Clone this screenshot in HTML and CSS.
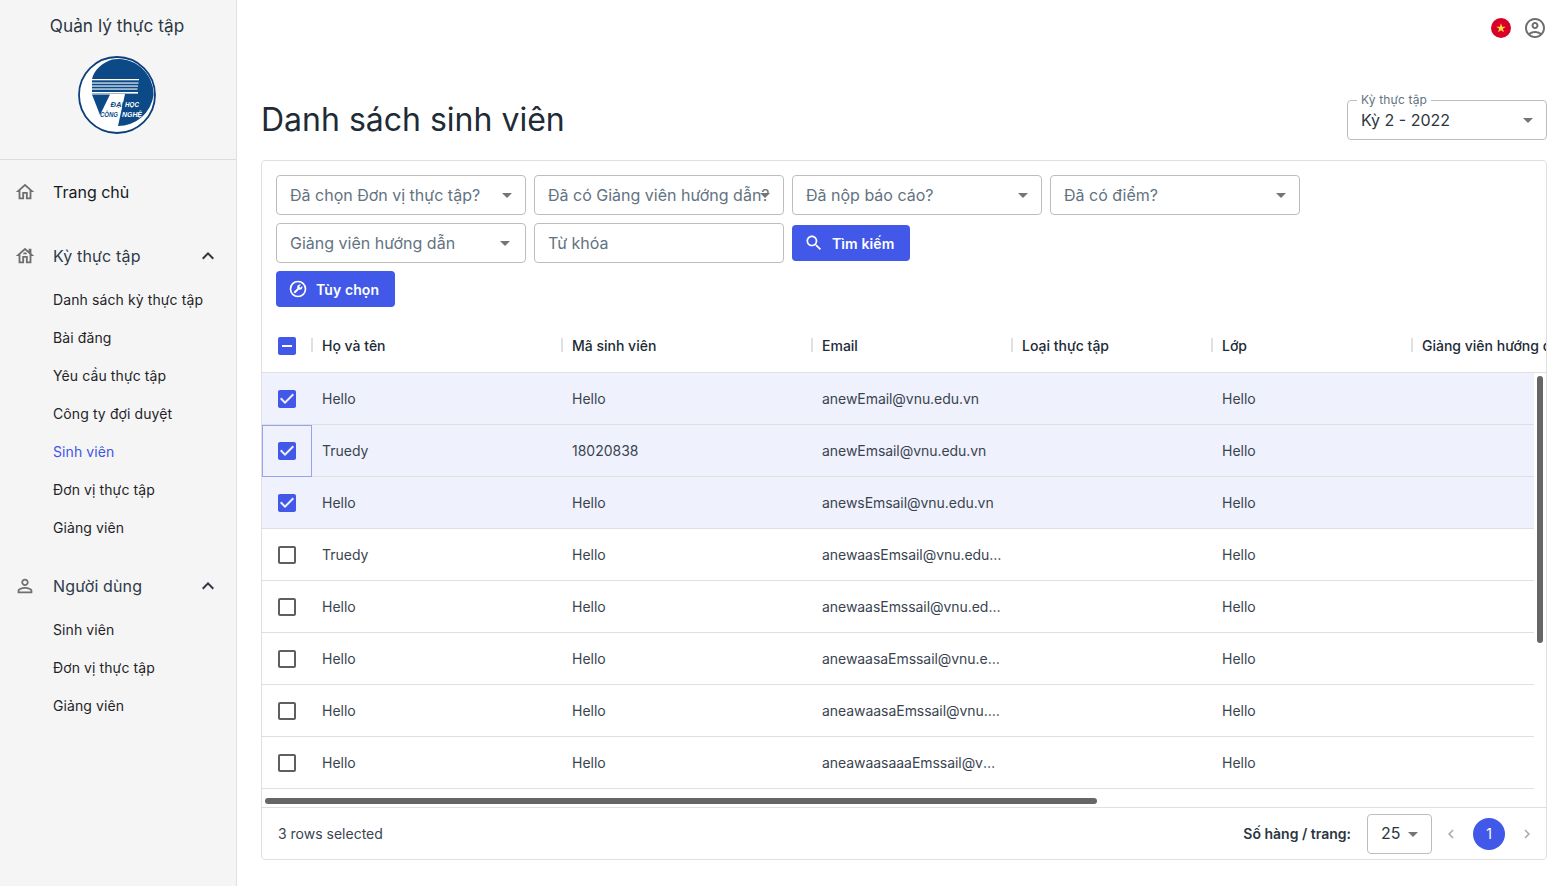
FILE: index.html
```html
<!DOCTYPE html>
<html lang="vi">
<head>
<meta charset="utf-8">
<title>Danh sách sinh viên</title>
<link rel="stylesheet" href="styles.css">
</head>
<body>
<svg class="defs" width="0" height="0" aria-hidden="true">
  <symbol id="cb-off" viewBox="0 0 24 24"><path d="M19 5v14H5V5h14m0-2H5c-1.1 0-2 .9-2 2v14c0 1.1.9 2 2 2h14c1.1 0 2-.9 2-2V5c0-1.1-.9-2-2-2z"/></symbol>
  <symbol id="cb-on" viewBox="0 0 24 24"><path d="M19 3H5c-1.11 0-2 .9-2 2v14c0 1.1.89 2 2 2h14c1.11 0 2-.9 2-2V5c0-1.1-.89-2-2-2zm-9 14l-5-5 1.41-1.41L10 14.17l7.59-7.59L19 8l-9 9z"/></symbol>
  <symbol id="cb-mid" viewBox="0 0 24 24"><path d="M19 3H5c-1.1 0-2 .9-2 2v14c0 1.1.9 2 2 2h14c1.1 0 2-.9 2-2V5c0-1.1-.9-2-2-2zm-2 10H7v-2h10v2z"/></symbol>
  <symbol id="less" viewBox="0 0 24 24"><path d="M12 8l-6 6 1.41 1.41L12 10.83l4.59 4.58L18 14z"/></symbol>
  <symbol id="drop" viewBox="0 0 24 24"><path d="M7 10l5 5 5-5z"/></symbol>
</svg>
<div class="app">
  <aside class="sidebar">
    <div class="brand">
      <div class="brand-title">Quản lý thực tập</div>
      <svg class="logo" viewBox="0 0 78 78" width="78" height="78">
        <circle cx="39" cy="39" r="38" fill="#fff" stroke="#0b3f7d" stroke-width="1.8"/>
        <path d="M14 23C16 14 24 7 34 3.5A35.6 35.6 0 0 1 75.6 39 36 36 0 0 1 40 70L47 38H14Z" fill="#0b4a86"/>
        <path d="M14 38.5H32L22 59Z" fill="#0b4a86"/>
        <g fill="#fff">
          <rect x="14" y="23" width="47" height="1.3"/>
          <rect x="14" y="26.5" width="46.5" height="1.1"/>
          <rect x="14" y="29.5" width="46" height="1.1"/>
          <rect x="14" y="32.5" width="45.5" height="1.1"/>
          <rect x="14" y="36" width="46" height="1.6"/>
        </g>
        <text class="logo-text logo-dark" x="32.5" y="50.5" textLength="13" lengthAdjust="spacingAndGlyphs">ĐẠI</text>
        <text class="logo-text" x="47" y="50.5" textLength="14" lengthAdjust="spacingAndGlyphs">HỌC</text>
        <text class="logo-text logo-dark" x="22" y="61" textLength="18" lengthAdjust="spacingAndGlyphs">CÔNG</text>
        <text class="logo-text" x="44" y="61" textLength="20" lengthAdjust="spacingAndGlyphs">NGHỆ</text>
      </svg>
    </div>
    <nav class="nav">
      <a class="nav-top nav-first"><svg class="nav-icon" viewBox="0 0 24 24"><path d="M12 5.69l5 4.5V18h-2v-6H9v6H7v-7.81l5-4.5M12 3L2 12h3v8h6v-6h2v6h6v-8h3L12 3z"/></svg><span>Trang chủ</span></a>
      <a class="nav-top nav-group"><svg class="nav-icon" viewBox="0 0 24 24"><path d="M19 9.3V4h-3v2.6L12 3 2 12h3v8h6v-6h2v6h6v-8h3l-3-2.7zM17 18h-2v-6H9v6H7v-7.81l5-4.5 5 4.5V18z"/><path d="M10 10h4c0-1.1-.9-2-2-2s-2 .9-2 2z"/></svg><span>Kỳ thực tập</span><svg class="nav-chevron"><use href="#less"/></svg></a>
      <div class="nav-sub">
        <a class="nav-item">Danh sách kỳ thực tập</a>
        <a class="nav-item">Bài đăng</a>
        <a class="nav-item">Yêu cầu thực tập</a>
        <a class="nav-item">Công ty đợi duyệt</a>
        <a class="nav-item is-active">Sinh viên</a>
        <a class="nav-item">Đơn vị thực tập</a>
        <a class="nav-item">Giảng viên</a>
      </div>
      <a class="nav-top nav-group"><svg class="nav-icon" viewBox="0 0 24 24"><path d="M12 5.9c1.16 0 2.1.94 2.1 2.1s-.94 2.1-2.1 2.1S9.9 9.16 9.9 8s.94-2.1 2.1-2.1m0 9c2.97 0 6.1 1.46 6.1 2.1v1.1H5.9V17c0-.64 3.13-2.1 6.1-2.1M12 4C9.79 4 8 5.79 8 8s1.79 4 4 4 4-1.79 4-4-1.79-4-4-4zm0 9c-2.67 0-8 1.34-8 4v3h16v-3c0-2.66-5.33-4-8-4z"/></svg><span>Người dùng</span><svg class="nav-chevron"><use href="#less"/></svg></a>
      <div class="nav-sub">
        <a class="nav-item">Sinh viên</a>
        <a class="nav-item">Đơn vị thực tập</a>
        <a class="nav-item">Giảng viên</a>
      </div>
    </nav>
  </aside>
  <main class="main">
    <header class="topbar">
      <svg class="flag" viewBox="0 0 20 20" width="20" height="20"><circle cx="10" cy="10" r="10" fill="#d80027"/><path d="M10 5.2l1.13 3.48h3.65l-2.95 2.15 1.12 3.47L10 12.15 7.05 14.3l1.12-3.47-2.95-2.15h3.65z" fill="#ffda44"/></svg>
      <svg class="account" viewBox="0 0 24 24" width="24" height="24"><path d="M12 2C6.48 2 2 6.48 2 12s4.48 10 10 10 10-4.48 10-10S17.52 2 12 2zM7.35 18.5C8.66 17.56 10.26 17 12 17s3.34.56 4.65 1.5c-1.31.94-2.91 1.5-4.65 1.5s-3.34-.56-4.65-1.5zm10.79-1.38C16.45 15.8 14.32 15 12 15s-4.45.8-6.14 2.12C4.7 15.73 4 13.95 4 12c0-4.42 3.58-8 8-8s8 3.58 8 8c0 1.95-.7 3.73-1.86 5.12z"/><path d="M12 6c-1.93 0-3.5 1.57-3.5 3.5S10.07 13 12 13s3.5-1.57 3.5-3.5S13.93 6 12 6zm0 5c-.83 0-1.5-.67-1.5-1.5S11.17 8 12 8s1.5.67 1.5 1.5S12.83 11 12 11z"/></svg>
    </header>
    <section class="page-head">
      <h1 class="page-title">Danh sách sinh viên</h1>
      <div class="field field-term">
        <span class="field-label">Kỳ thực tập</span>
        <span class="field-value">Kỳ 2 - 2022</span>
        <svg class="field-arrow"><use href="#drop"/></svg>
      </div>
    </section>
    <section class="card">
      <div class="filters">
        <div class="filter-row">
          <div class="field"><span class="field-text">Đã chọn Đơn vị thực tập?</span><svg class="field-arrow"><use href="#drop"/></svg></div>
          <div class="field"><span class="field-text">Đã có Giảng viên hướng dẫn?</span><svg class="field-arrow"><use href="#drop"/></svg></div>
          <div class="field"><span class="field-text">Đã nộp báo cáo?</span><svg class="field-arrow"><use href="#drop"/></svg></div>
          <div class="field"><span class="field-text">Đã có điểm?</span><svg class="field-arrow"><use href="#drop"/></svg></div>
        </div>
        <div class="filter-row">
          <div class="field"><span class="field-text">Giảng viên hướng dẫn</span><svg class="field-arrow field-arrow-auto"><use href="#drop"/></svg></div>
          <div class="field"><span class="field-text">Từ khóa</span></div>
          <button class="btn"><svg class="btn-icon" viewBox="0 0 24 24"><path d="M15.5 14h-.79l-.28-.27C15.41 12.59 16 11.11 16 9.5 16 5.91 13.09 3 9.5 3S3 5.91 3 9.5 5.91 16 9.5 16c1.61 0 3.09-.59 4.23-1.57l.27.28v.79l5 4.99L20.49 19l-4.99-5zm-6 0C7.01 14 5 11.99 5 9.5S7.01 5 9.5 5 14 7.01 14 9.5 11.99 14 9.5 14z"/></svg>Tìm kiếm</button>
        </div>
        <div class="filter-row filter-row-btn">
          <button class="btn"><svg class="btn-icon" viewBox="0 0 24 24"><circle cx="12" cy="12" r="9" fill="none" stroke="#fff" stroke-width="2"/><path transform="translate(17.8 6.2) scale(-.48 .48)" d="M22.7 19l-9.1-9.1c.9-2.3.4-5-1.5-6.9-2-2-5-2.4-7.4-1.3L9 6 6 9 1.6 4.7C.4 7.1.9 10.1 2.9 12.1c1.9 1.9 4.6 2.4 6.9 1.5l9.1 9.1c.4.4 1 .4 1.4 0l2.3-2.3c.5-.4.5-1.1.1-1.4z"/></svg>Tùy chọn</button>
        </div>
      </div>
      <div class="grid">
        <div class="grid-head">
          <div class="cell cell-check"><svg class="check is-on"><use href="#cb-mid"/></svg><i class="sep"></i></div>
          <div class="cell c-name">Họ và tên<i class="sep"></i></div>
          <div class="cell c-code">Mã sinh viên<i class="sep"></i></div>
          <div class="cell c-mid">Email<i class="sep"></i></div>
          <div class="cell c-mid">Loại thực tập<i class="sep"></i></div>
          <div class="cell c-mid">Lớp<i class="sep"></i></div>
          <div class="cell c-last">Giảng viên hướng dẫn</div>
        </div>
        <div class="grid-body">
          <div class="row is-selected"><div class="cell cell-check"><svg class="check is-on"><use href="#cb-on"/></svg></div><div class="cell c-name">Hello</div><div class="cell c-code">Hello</div><div class="cell c-mid c-email">anewEmail@vnu.edu.vn</div><div class="cell c-mid"></div><div class="cell c-mid">Hello</div></div>
          <div class="row is-selected"><div class="cell cell-check is-focused"><svg class="check is-on"><use href="#cb-on"/></svg></div><div class="cell c-name">Truedy</div><div class="cell c-code">18020838</div><div class="cell c-mid c-email">anewEmsail@vnu.edu.vn</div><div class="cell c-mid"></div><div class="cell c-mid">Hello</div></div>
          <div class="row is-selected"><div class="cell cell-check"><svg class="check is-on"><use href="#cb-on"/></svg></div><div class="cell c-name">Hello</div><div class="cell c-code">Hello</div><div class="cell c-mid c-email">anewsEmsail@vnu.edu.vn</div><div class="cell c-mid"></div><div class="cell c-mid">Hello</div></div>
          <div class="row"><div class="cell cell-check"><svg class="check"><use href="#cb-off"/></svg></div><div class="cell c-name">Truedy</div><div class="cell c-code">Hello</div><div class="cell c-mid c-email">anewaasEmsail@vnu.edu.vn</div><div class="cell c-mid"></div><div class="cell c-mid">Hello</div></div>
          <div class="row"><div class="cell cell-check"><svg class="check"><use href="#cb-off"/></svg></div><div class="cell c-name">Hello</div><div class="cell c-code">Hello</div><div class="cell c-mid c-email">anewaasEmssail@vnu.edu.vn</div><div class="cell c-mid"></div><div class="cell c-mid">Hello</div></div>
          <div class="row"><div class="cell cell-check"><svg class="check"><use href="#cb-off"/></svg></div><div class="cell c-name">Hello</div><div class="cell c-code">Hello</div><div class="cell c-mid c-email">anewaasaEmssail@vnu.edu.vn</div><div class="cell c-mid"></div><div class="cell c-mid">Hello</div></div>
          <div class="row"><div class="cell cell-check"><svg class="check"><use href="#cb-off"/></svg></div><div class="cell c-name">Hello</div><div class="cell c-code">Hello</div><div class="cell c-mid c-email">aneawaasaEmssail@vnu.edu.vn</div><div class="cell c-mid"></div><div class="cell c-mid">Hello</div></div>
          <div class="row"><div class="cell cell-check"><svg class="check"><use href="#cb-off"/></svg></div><div class="cell c-name">Hello</div><div class="cell c-code">Hello</div><div class="cell c-mid c-email">aneawaasaaaEmssail@vnu.edu.vn</div><div class="cell c-mid"></div><div class="cell c-mid">Hello</div></div>
        </div>
        <div class="thumb-v"></div>
        <div class="thumb-h"></div>
      </div>
      <footer class="grid-foot">
        <span class="selected-count">3 rows selected</span>
        <div class="pager">
          <span class="pager-label">Số hàng / trang:</span>
          <div class="field field-size"><span class="field-value">25</span><svg class="field-arrow"><use href="#drop"/></svg></div>
          <svg class="pager-chev pager-prev" viewBox="0 0 24 24"><path d="M15.41 7.41L14 6l-6 6 6 6 1.41-1.41L10.83 12z"/></svg>
          <span class="pager-num">1</span>
          <svg class="pager-chev pager-next" viewBox="0 0 24 24"><path d="M10 6L8.59 7.41 13.17 12l-4.58 4.59L10 18l6-6z"/></svg>
        </div>
      </footer>
    </section>
  </main>
</div>
</body>
</html>
```
FILE: styles.css
```css
* { box-sizing: border-box; }
html, body { margin: 0; height: 100%; overflow: hidden; }
body { font-family: Inter, "Noto Sans", sans-serif; font-size: 14px; color: #212b36; background: #fff; }
.defs { position: absolute; }
.app { display: flex; height: 100vh; }

.sidebar { width: 237px; flex: none; background: #f5f5f5; border-right: 1px solid #e0e0e0; }
.brand { height: 160px; border-bottom: 1px solid #dcdcdc; display: flex; flex-direction: column; align-items: center; padding: 15px 2px 0 0; }
.brand-title { font-size: 17.2px; line-height: 22px; letter-spacing: .05px; color: #2b3642; }
.logo { margin-top: 19px; }
.logo-text { font-size: 7.6px; font-weight: 700; font-style: italic; fill: #fff; font-family: "Liberation Sans", sans-serif; }
.logo-dark { fill: #0b4a86; }
.nav { padding-top: 12px; }
.nav-top { display: flex; align-items: center; height: 40px; padding-left: 14px; font-size: 16px; color: #2f3b4a; }
.nav-first { color: #17191c; margin-bottom: 24px; }
.nav-group { letter-spacing: .15px; }
.nav-icon { width: 22px; height: 22px; fill: #6f6f6f; margin-right: 17px; flex: none; }
.nav-chevron { width: 24px; height: 24px; fill: #2b3642; margin-left: auto; margin-right: 16px; }
.nav-sub { display: flex; flex-direction: column; padding-top: 5px; padding-bottom: 19px; }
.nav-item { height: 38px; line-height: 38px; padding-left: 53px; font-size: 14px; letter-spacing: .1px; color: #1f2428; }
.nav-item.is-active { color: #3f56e8; }

.main { flex: 1; min-width: 0; display: flex; flex-direction: column; padding: 0 18px 26px 24px; }
.topbar { height: 56px; flex: none; display: flex; align-items: center; justify-content: flex-end; gap: 12px; }
.flag { flex: none; }
.account { flex: none; fill: #6e6e6e; }
.page-head { flex: none; display: flex; justify-content: space-between; align-items: flex-end; height: 84px; margin-bottom: 20px; }
.page-title { margin: 0; font-size: 32px; line-height: 40px; font-weight: 400; color: #212b36; }

.field { position: relative; width: 250px; height: 40px; flex: none; border: 1px solid #bdbdbd; border-radius: 4px; background: #fff; display: flex; align-items: center; padding: 0 13px; overflow: hidden; }
.field-term { width: 200px; overflow: visible; }
.field-text { font-size: 16px; color: #637381; white-space: nowrap; }
.field-value { font-size: 16px; color: #2b3642; white-space: nowrap; }
.field-label { position: absolute; left: 9px; top: -9px; padding: 0 4px; font-size: 12px; line-height: 15px; letter-spacing: .15px; color: #637381; background: #fff; }
.field-arrow { position: absolute; right: 6px; top: 7px; width: 24px; height: 24px; fill: #757575; }
.field-arrow-auto { right: 8px; }

.card { flex: 1; min-height: 0; border: 1px solid #e0e0e0; border-radius: 4px; display: flex; flex-direction: column; overflow: hidden; }
.filters { flex: none; padding: 14px 14px 13px; display: flex; flex-direction: column; gap: 8px; }
.filter-row { display: flex; align-items: center; gap: 8px; height: 40px; }
.filter-row-btn { height: 36px; }
.btn { height: 36px; display: inline-flex; align-items: center; gap: 8px; padding: 0 16px 0 12px; border: 0; border-radius: 4px; background: #4158e8; color: #fff; font: 600 14px Inter, sans-serif; letter-spacing: .1px; }
.btn-icon { width: 20px; height: 20px; fill: #fff; }

.grid { flex: 1; min-height: 0; position: relative; overflow: hidden; }
.grid-head { display: flex; height: 53px; padding-bottom: 1px; border-bottom: 1px solid #e0e0e0; font-weight: 500; color: #212b36; }
.row { display: flex; height: 52px; border-bottom: 1px solid #e0e0e0; width: 1272px; color: #3a4451; }
.row.is-selected { background: #eff1fc; }
.cell { position: relative; display: flex; align-items: center; padding: 0 10px; white-space: nowrap; overflow: hidden; flex: none; }
.grid-head .cell { overflow: visible; }
.row .cell { display: block; line-height: 51px; text-overflow: ellipsis; }
.cell-check { width: 50px; padding: 0 13px; }
.row .cell-check { display: flex; align-items: center; }
.c-name, .c-code { width: 250px; }
.c-mid { width: 200px; }
.c-last { width: 200px; }
.c-email { letter-spacing: -.05px; }
.check { width: 24px; height: 24px; fill: #5f5f5f; flex: none; }
.check.is-on { fill: #4158e8; }
.row .is-focused { height: 52px; padding-bottom: 1px; outline: 1px solid #97a3ef; outline-offset: -1px; }
.sep { position: absolute; right: -1px; top: 18px; width: 2px; height: 14px; background: #e0e0e0; }
.thumb-v { position: absolute; left: 1275px; top: 56px; width: 6px; height: 267px; border-radius: 3px; background: #666; }
.thumb-h { position: absolute; left: 3px; bottom: 3px; width: 832px; height: 6px; border-radius: 3px; background: #666; }

.grid-foot { flex: none; height: 52px; border-top: 1px solid #e0e0e0; display: flex; align-items: center; justify-content: space-between; padding: 0 8px 0 16px; }
.selected-count { color: #3a4451; }
.pager { display: flex; align-items: center; }
.pager-label { font-weight: 600; color: #2b3642; margin-right: 16px; }
.field-size { width: 65px; padding: 0 13px 2px; }
.pager-chev { width: 18px; height: 18px; fill: #a8a8a8; }
.pager-prev { margin-left: 10px; }
.pager-num { width: 32px; height: 32px; margin: 0 15px 0 13px; border-radius: 50%; background: #4158e8; color: #fff; display: flex; align-items: center; justify-content: center; font-size: 14px; }
.pager-next { margin-right: 2px; margin-left: -2px; }
```
